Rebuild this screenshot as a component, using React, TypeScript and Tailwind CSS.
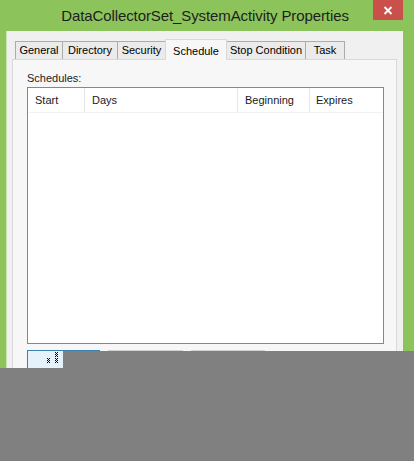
import React from "react";

const tabs = [
  { label: "General", w: 48 },
  { label: "Directory", w: 56 },
  { label: "Security", w: 49 },
  { label: "Schedule", w: 62, active: true },
  { label: "Stop Condition", w: 80 },
  { label: "Task", w: 40 },
];

const cols = [
  { label: "Start", w: 57 },
  { label: "Days", w: 153 },
  { label: "Beginning", w: 72 },
  { label: "Expires", w: 0 },
];

function Checker() {
  const dots: [number, number][] = [];
  for (let y = 0; y < 5; y++) for (let x = 0; x < 3; x++) if ((x + y) % 2 === 0) dots.push([8 + x, y]);
  for (let y = 6; y < 11; y++) for (let x = 0; x < 3; x++) if ((x + y) % 2 === 0) { dots.push([x, y]); dots.push([8 + x, y]); }
  return (
    <svg width="12" height="11" viewBox="0 0 12 11" className="block">
      {dots.map(([x, y], i) => (
        <rect key={i} x={x} y={y} width="1" height="1" fill="#000" />
      ))}
    </svg>
  );
}

export default function App() {
  return (
    <div className="relative w-[414px] h-[461px] overflow-hidden bg-[#8cc45b] font-['Liberation_Sans',Arial,sans-serif] text-[11px] text-black">
      {/* title bar */}
      <div className="relative h-[31px] flex items-center justify-center">
        <span className="text-[15px] text-[#1e1e1e] tracking-[-0.1px] mt-[2px] -ml-[4px]">DataCollectorSet_SystemActivity Properties</span>
        <div className="absolute top-0 right-[11px] w-[30px] h-[20px] bg-[#c9504b] flex items-center justify-center">
          <svg width="10" height="9" viewBox="0 0 10 9">
            <path d="M1.5 1 L8.5 8 M8.5 1 L1.5 8" stroke="#fff" strokeWidth="1.8" />
          </svg>
        </div>
      </div>
      {/* body */}
      <div className="ml-[6px] w-[397px] h-[430px] border-l border-[#c8e3b0] bg-[#f0f0f0] pt-[8px]">
        {/* tabs */}
        <div className="flex items-end h-[20px] pl-[8px]">
          {tabs.map((t) =>
            t.active ? (
              <div
                key={t.label}
                style={{ width: t.w }}
                className="relative z-10 -ml-[1px] h-[21px] -mb-[1px] border border-b-0 border-[#d9d9d9] bg-[#f7f7f7] flex items-start justify-center pt-[3px]"
              >
                {t.label}
              </div>
            ) : (
              <div
                key={t.label}
                style={{ width: t.w }}
                className="-ml-[1px] h-[18px] border border-b-0 border-[#acacac] bg-[#ebebeb] flex items-center justify-center first:ml-0"
              >
                {t.label}
              </div>
            )
          )}
        </div>
        {/* panel */}
        <div className="ml-[5px] w-[385px] h-[330px] border border-[#d9d9d9] bg-[#f7f7f7] pl-[14px] pt-[11px]">
          <div className="h-[14px] leading-[14px] text-[#1a1a1a]">Schedules:</div>
          <div className="mt-[2px] w-[357px] h-[257px] border border-[#828790] bg-white">
            <div className="flex h-[25px] border-b border-[#f2f2f2]">
              {cols.map((c) => (
                <div
                  key={c.label}
                  style={c.w ? { width: c.w } : undefined}
                  className={
                    c.w
                      ? "h-full border-r border-[#e5e5e5] pl-[7px] flex items-center text-[#1a1a1a]"
                      : "h-full flex-1 pl-[6px] flex items-center text-[#1a1a1a]"
                  }
                >
                  {c.label}
                </div>
              ))}
            </div>
          </div>
          <div className="mt-[6px] flex gap-[8px]">
            <div className="w-[73px] h-[23px] border border-[#3c7fb1] bg-[#e5f1fb] pl-[19px] pt-[1px]">
              <Checker />
            </div>
            <div className="w-[75px] h-[23px] border border-[#d0d0d0] bg-[#ececec]" />
            <div className="w-[74px] h-[23px] border border-[#d0d0d0] bg-[#ececec]" />
          </div>
        </div>
      </div>
      {/* gray overlay */}
      <div className="absolute left-[63px] top-[351px] w-[351px] h-[17px] bg-[#808080]" />
      <div className="absolute left-0 top-[368px] w-[414px] h-[93px] bg-[#808080]" />
    </div>
  );
}
